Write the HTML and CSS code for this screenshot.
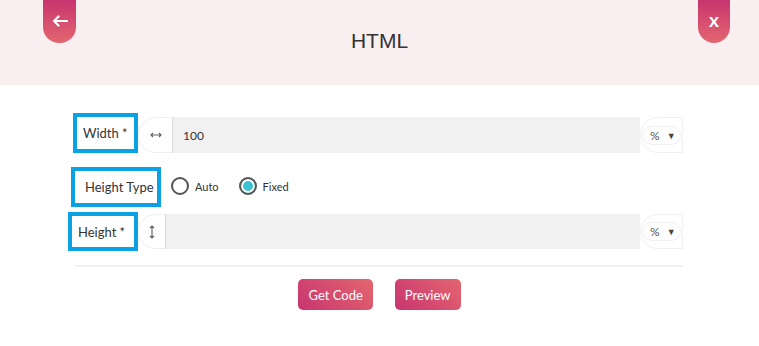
FILE: index.html
```html
<!DOCTYPE html>
<html lang="en">
<head>
    <meta charset="UTF-8">
    <meta name="viewport" content="width=device-width, initial-scale=1.0">
    <title>HTML</title>
    <link rel="stylesheet" href="styles.css">
</head>
<body>
    <header class="top-bar">
        <button class="tab-btn tab-back" aria-label="Back">
            <svg width="16" height="12" viewBox="0 0 16 12">
                <path d="M15 6H2M6.5 1.5L2 6l4.5 4.5" fill="none" stroke="#fff" stroke-width="2.2" stroke-linecap="round" stroke-linejoin="round"/>
            </svg>
        </button>
        <h1 class="title">HTML</h1>
        <button class="tab-btn tab-close" aria-label="Close">X</button>
    </header>

    <main class="form">
        <!-- width -->
        <div class="row row-width">
            <label class="field-label label-width">Width *</label>
            <div class="input-group">
                <span class="addon addon-width">
                    <svg width="12" height="6" viewBox="0 0 12 6">
                        <path d="M1 3h10M3 1L1 3l2 2M9 1l2 2-2 2" fill="none" stroke="#666" stroke-width="1.2"/>
                    </svg>
                </span>
                <input class="text-input" type="text" value="100">
                <div class="unit"><span class="unit-pill">% <span class="caret">&#9660;</span></span></div>
            </div>
        </div>

        <!-- height type -->
        <div class="row row-type">
            <label class="field-label label-type">Height Type</label>
            <div class="radios">
                <span class="radio"><span class="radio-dot"></span>Auto</span>
                <span class="radio checked"><span class="radio-dot"></span>Fixed</span>
            </div>
        </div>

        <!-- height -->
        <div class="row row-height">
            <label class="field-label label-height">Height *</label>
            <div class="input-group">
                <span class="addon addon-height">
                    <svg width="6" height="14" viewBox="0 0 6 14">
                        <path d="M3 1v12M1 3l2-2 2 2M1 11l2 2 2-2" fill="none" stroke="#666" stroke-width="1.2"/>
                    </svg>
                </span>
                <input class="text-input" type="text" value="">
                <div class="unit"><span class="unit-pill">% <span class="caret">&#9660;</span></span></div>
            </div>
        </div>

        <div class="divider"></div>

        <div class="actions">
            <button class="btn">Get Code</button>
            <button class="btn">Preview</button>
        </div>
    </main>
</body>
</html>
```

FILE: styles.css
```css
body {
    margin: 0;
    background: #fff;
    font-family: 'Lato', 'Open Sans', sans-serif;
    color: #333;
}

.top-bar {
    position: relative;
    height: 85px;
    background: #f9eef0;
    text-align: center;
}

.title {
    margin: 0;
    padding-top: 29px;
    font-family: 'Liberation Sans', Arial, sans-serif;
    font-size: 21px;
    line-height: 24px;
    font-weight: normal;
    color: #333;
}

.tab-btn {
    position: absolute;
    top: 0;
    width: 33px;
    height: 43px;
    padding: 0;
    border: none;
    border-radius: 0 0 16px 16px;
    background: linear-gradient(180deg, #c8356f 0%, #e3666f 100%);
    color: #fff;
    display: flex;
    align-items: center;
    justify-content: center;
}

.tab-back {
    left: 43px;
    padding-bottom: 2px;
}

.tab-close {
    right: 29px;
    width: 32px;
    font-family: 'Open Sans', sans-serif;
    font-size: 15px;
    font-weight: bold;
    padding-bottom: 2px;
}

.form {
    padding: 28px 76px 0 68px;
}

.row {
    display: flex;
}

.row-width {
    align-items: flex-end;
    margin-left: 5px;
}

.row-type {
    align-items: center;
    margin-top: 14px;
    margin-left: 3px;
}

.row-height {
    align-items: center;
    margin-top: 5px;
}

.field-label {
    box-sizing: border-box;
    border: 4px solid #0aa2e2;
    height: 40px;
    font-size: 13px;
    color: #333;
    display: flex;
    align-items: center;
    white-space: nowrap;
    flex-shrink: 0;
}

.label-width {
    width: 65px;
    padding-left: 6px;
}

.label-type {
    width: 90px;
    padding-left: 10px;
}

.label-height {
    width: 70px;
    height: 39px;
    padding-left: 6px;
}

.input-group {
    flex: 1;
    display: flex;
    height: 36px;
}

.row-height .input-group {
    height: 35px;
}

.addon {
    box-sizing: border-box;
    border: 1px solid #efefef;
    border-right: none;
    border-radius: 18px 0 0 18px;
    background: #fff;
    display: flex;
    align-items: center;
    justify-content: center;
}

.addon-width {
    width: 34px;
}

.addon-height {
    width: 27px;
}

.text-input {
    flex: 1;
    min-width: 0;
    border: none;
    border-left: 1px solid #ddd;
    background: #f1f1f1;
    padding: 0 10px;
    font-family: 'Lato', sans-serif;
    font-size: 12px;
    color: #333;
    outline: none;
}

.unit {
    box-sizing: border-box;
    width: 43px;
    border: 1px solid #f0f0f0;
    border-radius: 18px 0 0 18px;
    display: flex;
    align-items: center;
    padding-left: 1px;
}

.unit-pill {
    box-sizing: border-box;
    width: 39px;
    height: 19px;
    border: 1px solid #f0f0f0;
    border-radius: 10px;
    display: flex;
    align-items: center;
    padding-left: 7px;
    font-size: 12px;
    color: #555;
}

.caret {
    font-size: 9px;
    color: #444;
    margin-left: 7px;
}

.radios {
    display: flex;
    align-items: center;
    margin-left: 10px;
    margin-top: -2px;
    gap: 20px;
}

.radio {
    display: flex;
    align-items: center;
    font-size: 11px;
    color: #333;
}

.radio-dot {
    box-sizing: border-box;
    width: 18px;
    height: 18px;
    border: 2px solid #555;
    border-radius: 50%;
    margin-right: 6px;
    background: #fff;
}

.radio.checked .radio-dot {
    background: #3bc3d3;
    box-shadow: inset 0 0 0 2px #fff;
}

.divider {
    height: 2px;
    background: #f0f0f0;
    margin: 14px 0 0 7px;
}

.actions {
    display: flex;
    justify-content: center;
    gap: 22px;
    margin-top: 12px;
    margin-left: 8px;
}

.btn {
    height: 31px;
    padding: 0 10px;
    border: none;
    border-radius: 5px;
    background: linear-gradient(45deg, #c8356f 0%, #e3666f 100%);
    color: #fff;
    font-family: 'Lato', sans-serif;
    font-size: 13px;
}
```
